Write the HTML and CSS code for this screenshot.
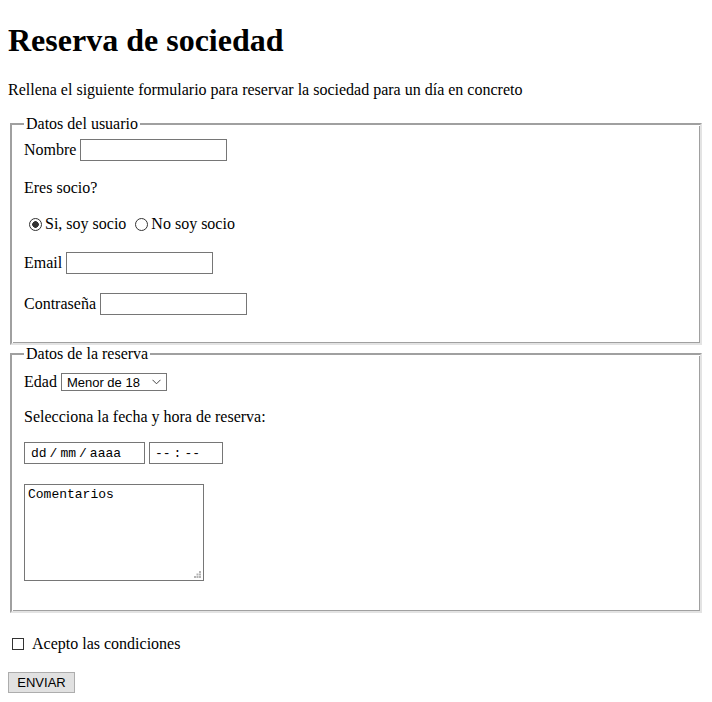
FILE: index.html
```html
<!DOCTYPE html>
<html lang="es">
<head>
<meta charset="utf-8">
<title>Reserva de sociedad</title>
<link rel="stylesheet" href="styles.css">
</head>
<body>
<h1 class="title">Reserva de sociedad</h1>
<p class="intro">Rellena el siguiente formulario para reservar la sociedad para un día en concreto</p>
<form class="form">
<fieldset class="box box-user">
<legend class="legend">Datos del usuario</legend>
<label class="row row-input">Nombre <input type="text" class="txt"></label>
<p class="row row-text r-eres">Eres socio?</p>
<div class="row row-radio">
<label class="opt"><input type="radio" name="socio" class="radio" checked>Si, soy socio</label>
<label class="opt"><input type="radio" name="socio" class="radio">No soy socio</label>
</div>
<label class="row row-input r-email">Email <input type="email" class="txt"></label>
<label class="row row-input r-pass">Contraseña <input type="password" class="txt"></label>
</fieldset>
<fieldset class="box box-res">
<legend class="legend">Datos de la reserva</legend>
<label class="row row-sel">Edad <span class="sel"><span class="sel-text">Menor de 18</span><svg class="chev" width="9" height="6" viewBox="0 0 9 6"><path d="M0.5 0.8 L4.5 4.8 L8.5 0.8" fill="none" stroke="#444" stroke-width="1"/></svg></span></label>
<p class="row row-text r-sel">Selecciona la fecha y hora de reserva:</p>
<div class="row row-dt">
<span class="fake date"><span>dd</span><span>/</span><span>mm</span><span>/</span><span>aaaa</span></span>
<span class="fake time"><span>--</span><span>:</span><span>--</span></span>
</div>
<div class="row r-area">
<span class="area-wrap"><textarea class="area">Comentarios</textarea><svg class="grip" width="7" height="7" viewBox="0 0 7 7"><g fill="#b4b4b4"><rect x="5" y="0" width="2" height="2"/><rect x="2.5" y="2.5" width="2" height="2"/><rect x="5" y="2.5" width="2" height="2"/><rect x="0" y="5" width="2" height="2"/><rect x="2.5" y="5" width="2" height="2"/><rect x="5" y="5" width="2" height="2"/></g></svg></span>
</div>
</fieldset>
<label class="row row-chk"><input type="checkbox" class="chk">Acepto las condiciones</label>
<div class="row row-btn"><button type="submit" class="btn">ENVIAR</button></div>
</form>
</body>
</html>
```
FILE: styles.css
```css
html, body {
  background: #fff;
}
body {
  margin: 8px;
  font-family: "Liberation Serif", "Times New Roman", serif;
  font-size: 16px;
  color: #000;
}
.title {
  font-size: 32px;
  line-height: 37px;
  font-weight: bold;
  margin: 14px 0 22px;
}
.intro {
  margin: 0;
  line-height: 18px;
}
.form {
  margin: 0;
  padding-top: 16px;
}
.box {
  margin: 0 2px;
  padding: 6px 12px 28px;
  border-width: 2px;
  border-style: solid;
  border-color: #a0a0a0 #e3e3e3 #e3e3e3 #a0a0a0;
  box-shadow: inset 1px 1px 0 #fff, inset -1px -1px 0 #a0a0a0;
  display: flex;
  flex-direction: column;
  align-items: flex-start;
}
.box-res {
  padding-top: 7px;
  padding-bottom: 30px;
}
.legend {
  padding: 0 2px;
  line-height: 18px;
}
.row {
  display: flex;
  align-items: center;
  margin: 0;
}
.row-input {
  height: 22px;
  gap: 4px;
}
.row-text {
  height: 18px;
}
.r-eres { margin-top: 18px; }
.row-radio {
  height: 20px;
  margin-top: 17px;
  gap: 4px;
}
.r-email { margin-top: 18px; }
.r-pass { margin-top: 19px; }
.opt {
  display: flex;
  align-items: center;
}
.radio {
  appearance: none;
  -webkit-appearance: none;
  box-sizing: border-box;
  width: 13px;
  height: 13px;
  margin: 0 3px 0 5px;
  border: 1px solid #333;
  border-radius: 50%;
  background: #fff;
}
.radio:checked {
  background: radial-gradient(circle, #333 0, #333 3px, #fff 3.6px);
}
.txt {
  box-sizing: border-box;
  width: 147px;
  height: 22px;
  margin: 0;
  padding: 1px 2px;
  border: 1px solid #767676;
  font-family: "Liberation Sans", Arial, sans-serif;
  font-size: 13px;
  background: #fff;
}
.row-sel {
  height: 18px;
  margin-top: 3px;
  gap: 4px;
}
.sel {
  box-sizing: border-box;
  width: 106px;
  height: 18px;
  border: 1px solid #767676;
  background: #fff;
  display: flex;
  align-items: center;
  justify-content: space-between;
  padding: 0 4px 0 5px;
  font-family: "Liberation Sans", Arial, sans-serif;
  font-size: 13px;
}
.chev {
  display: block;
  margin-right: 1px;
}
.r-sel { margin-top: 17px; }
.row-dt {
  height: 22px;
  margin-top: 16px;
  gap: 4px;
}
.fake {
  box-sizing: border-box;
  height: 22px;
  display: flex;
  align-items: center;
  gap: 3px;
  border: 1px solid #767676;
  padding: 0 6px;
  font-family: "Liberation Mono", "Courier New", monospace;
  font-size: 13px;
  background: #fff;
}
.date { width: 121px; }
.time { width: 74px; padding-left: 5px; }
.r-area {
  margin-top: 20px;
}
.area-wrap {
  position: relative;
  display: block;
  width: 180px;
  height: 97px;
}
.area {
  display: block;
  box-sizing: border-box;
  width: 180px;
  height: 97px;
  margin: 0;
  border: 1px solid #767676;
  padding: 2px 3px;
  font-family: "Liberation Mono", "Courier New", monospace;
  font-size: 13px;
  line-height: 15px;
  resize: none;
  color: #000;
}
.grip {
  position: absolute;
  right: 3px;
  bottom: 3px;
}
.row-chk {
  height: 18px;
  margin-top: 22px;
  gap: 4px;
}
.chk {
  appearance: none;
  -webkit-appearance: none;
  box-sizing: border-box;
  width: 12px;
  height: 12px;
  margin: 0 4px 0 4px;
  border: 1px solid #333;
  background: #fff;
}
.row-btn {
  margin-top: 19px;
}
.btn {
  box-sizing: border-box;
  width: 67px;
  height: 21px;
  margin: 0;
  padding: 0;
  border: 1px solid #adadad;
  background: #e1e1e1;
  font-family: "Liberation Sans", Arial, sans-serif;
  font-size: 13px;
  color: #000;
}
```
